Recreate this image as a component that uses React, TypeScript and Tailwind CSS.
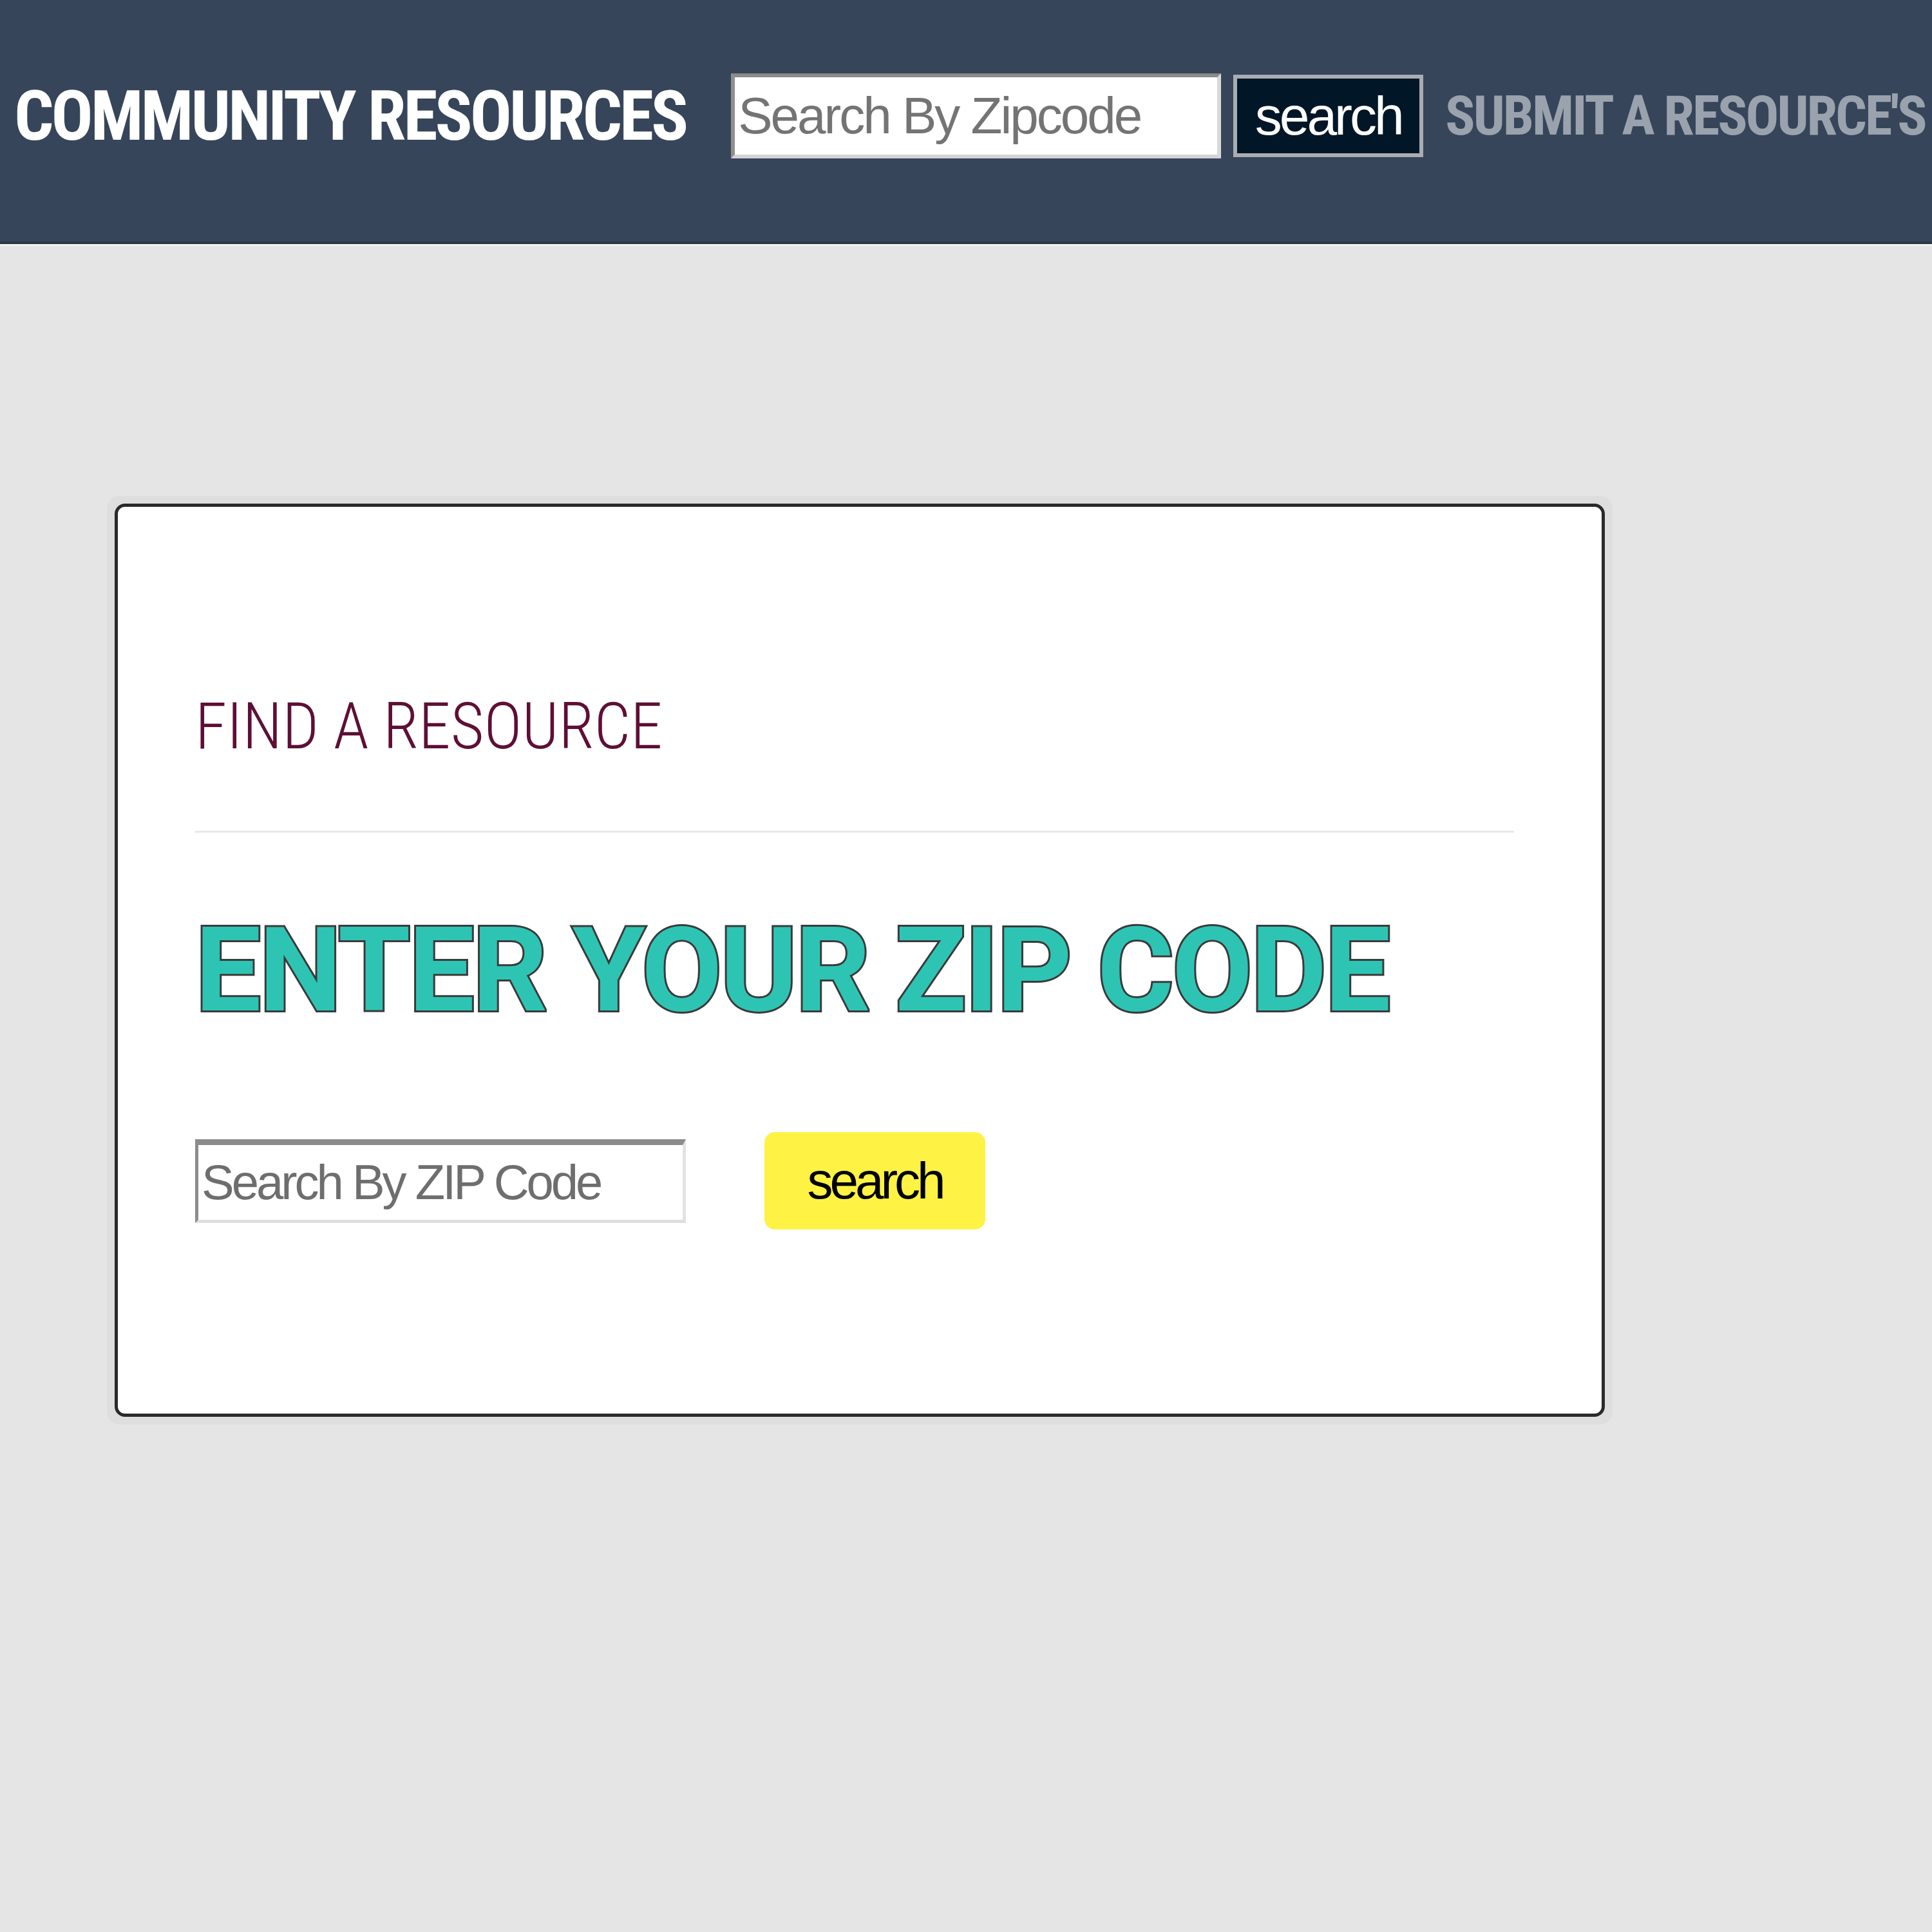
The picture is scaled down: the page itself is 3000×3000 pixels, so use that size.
const condensed = 'font-["Roboto_Condensed",Roboto,sans-serif]'

function Header() {
  return (
    <header className="flex h-[379px] items-center overflow-hidden whitespace-nowrap border-b-4 border-[#2b3848] bg-[#36455a] pb-[15px] pl-[22px]">
      <h1 className={`${condensed} text-[108px] font-bold leading-none tracking-[-4px] text-white`}>
        COMMUNITY RESOURCES
      </h1>
      <input
        type="text"
        placeholder="Search By Zipcode"
        className="ml-[70px] box-border h-[132px] w-[761px] shrink-0 border-[6px] border-t-[#8a8a8a] border-l-[#8f8f8f] border-r-[#d9d9d9] border-b-[#d4d4d4] bg-white pl-[5px] font-['Liberation_Sans',Arial,sans-serif] text-[80px] tracking-[-3px] text-black outline-none placeholder:text-[#747474]"
      />
      <button className="ml-[19px] box-border h-[128px] w-[295px] shrink-0 border-[6px] border-[#a9adb3] bg-[#011627] font-['Liberation_Sans',Arial,sans-serif] text-[84px] leading-none tracking-[-4px] text-white">
        search
      </button>
      <a className={`${condensed} ml-[34px] text-[86px] font-bold leading-none tracking-[-3px] text-[#9aa2ad]`}>
        SUBMIT A RESOURCE'S
      </a>
    </header>
  )
}

function FindCard() {
  return (
    <div className="ml-[166px] mt-[388px] w-[2338px] rounded-[20px] bg-[#dedede] p-[12px]">
      <div className="box-border h-[1418px] rounded-[16px] border-[5px] border-[#2a2a2a] bg-white pl-[120px] pt-[291px]">
        <h2 className={`${condensed} text-[100px] font-light leading-none text-[#5e0f35]`}>FIND A RESOURCE</h2>
        <div className="mt-[112px] h-[3px] w-[2048px] bg-[#e8e8e8]" />
        <h3 className="mt-[123px] font-['Roboto',sans-serif] text-[182px] font-bold leading-none tracking-[-3.2px] text-[#2ec4b4] [-webkit-text-stroke:6px_#3a3a3a] [paint-order:stroke_fill]">
          ENTER YOUR ZIP CODE
        </h3>
        <div className="mt-[160px] flex items-center gap-[122px]">
          <input
            type="text"
            placeholder="Search By ZIP Code"
            className="box-border h-[130px] w-[762px] border-[5px] border-t-[9px] border-t-[#8c8c8c] border-l-[#8c8c8c] border-r-[#e2e2e2] border-b-[#dedede] bg-white pl-[5px] font-['Liberation_Sans',Arial,sans-serif] text-[76px] tracking-[-4px] text-black outline-none placeholder:text-[#6e6e6e]"
          />
          <button className="box-border h-[151px] w-[343px] rounded-[16px] bg-[#fef244] font-['Liberation_Sans',Arial,sans-serif] text-[80px] leading-none tracking-[-5px] text-black">
            search
          </button>
        </div>
      </div>
    </div>
  )
}

export default function App() {
  return (
    <div className="min-h-[3000px] w-[3000px] overflow-hidden bg-[#e5e5e5]">
      <Header />
      <div className="h-[3px] bg-[#f2f2f2]" />
      <FindCard />
    </div>
  )
}
